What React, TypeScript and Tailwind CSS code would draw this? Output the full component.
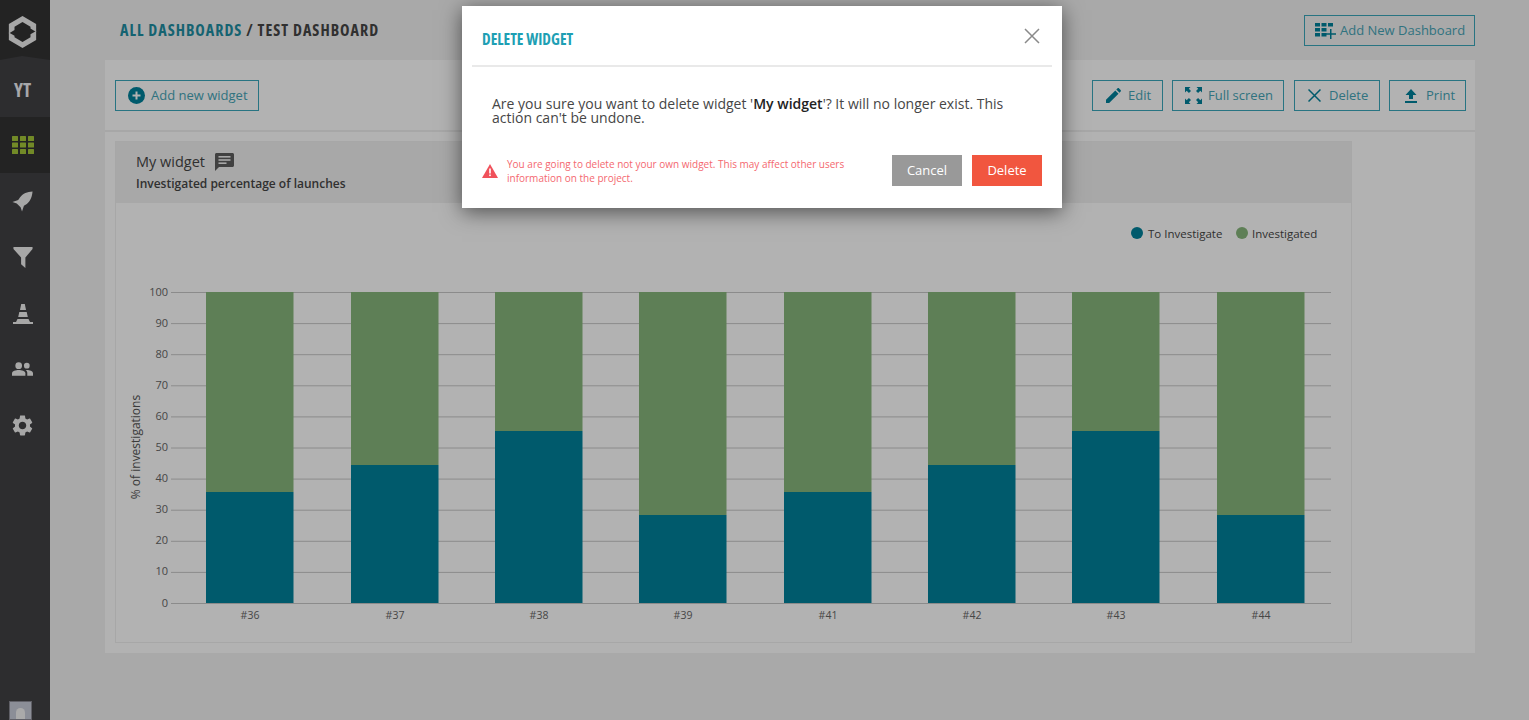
import type { ReactNode } from "react";

const bars = [
  { label: "#36", x: 206, top: 492 },
  { label: "#37", x: 351, top: 465 },
  { label: "#38", x: 495, top: 431 },
  { label: "#39", x: 639, top: 515 },
  { label: "#41", x: 784, top: 492 },
  { label: "#42", x: 928, top: 465 },
  { label: "#43", x: 1072, top: 431 },
  { label: "#44", x: 1217, top: 515 },
];

const ticks = [100, 90, 80, 70, 60, 50, 40, 30, 20, 10, 0];

const iconFill = "#f0f0f0";

function Logo() {
  return (
    <svg width="29" height="32" viewBox="0 0 30 34" fill={iconFill}>
      <path d="M15 0 29.500 8.500V17L23.500 13.200V11.500L15 6.500 6.500 11.500V15L.5 18.500V8.500Z" />
      <path d="M15 34 .5 25.500V17.500L6.500 21V22.500L15 27.500 23.500 22.500V19.500L29.500 16V25.500Z" />
    </svg>
  );
}

function Rocket() {
  return (
    <svg width="21" height="21" viewBox="0 0 22 22" fill={iconFill}>
      <path d="M21.500.5C16 1 11.500 2.500 8.500 6.500L6.500 9.500 .5 11.500 5 13 9 17 10.500 21.500 12.500 15.500 15.500 13.500C19.500 10.500 21 6 21.500.5Z" />
    </svg>
  );
}

function Funnel() {
  return (
    <svg width="20" height="21" viewBox="0 0 20 22" fill={iconFill}>
      <path d="M0 0H20V2L12.500 11V22L8 18V11L0 2Z" />
    </svg>
  );
}

function Cone() {
  return (
    <svg width="20" height="20" viewBox="0 0 20 20" fill={iconFill}>
      <path d="M8.200 0H11.800L13 6H7Z" />
      <path d="M6.300 8H13.700L14.800 13H5.200Z" />
      <path d="M4.500 15H15.500L17 18H20V20H0V18H3Z" />
    </svg>
  );
}

function People() {
  return (
    <svg width="21" height="14" viewBox="0 0 22 14" fill={iconFill}>
      <circle cx="7" cy="3.500" r="3.500" />
      <circle cx="15.500" cy="3.500" r="3" />
      <path d="M0 14V11.500C0 9 4 8 7 8S14 9 14 11.500V14Z" />
      <path d="M15.500 8C18.500 8 22 9 22 11.500V14H16V11C16 9.800 15.300 8.800 14.300 8.100Z" />
    </svg>
  );
}

function Gear() {
  return (
    <svg width="25" height="25" viewBox="0 0 24 24" fill={iconFill}>
      <path d="M19.140 12.940c.04-.3.060-.61.060-.94 0-.32-.02-.64-.07-.94l2.030-1.580c.18-.14.230-.41.120-.61l-1.920-3.320c-.12-.22-.37-.29-.59-.22l-2.390.96c-.5-.38-1.030-.7-1.620-.94l-.36-2.540c-.04-.24-.24-.41-.48-.41h-3.840c-.24 0-.43.170-.47.410l-.36 2.540c-.59.24-1.130.57-1.620.94l-2.390-.96c-.22-.08-.47 0-.59.220L2.740 8.870c-.12.210-.08.47.120.61l2.030 1.580c-.05.3-.09.63-.09.940s.02.640.07.940l-2.030 1.580c-.18.140-.23.410-.12.610l1.920 3.320c.12.220.37.290.59.220l2.390-.96c.5.380 1.030.7 1.620.94l.36 2.540c.05.240.24.410.48.410h3.840c.24 0 .44-.17.470-.41l.36-2.540c.59-.24 1.130-.56 1.620-.94l2.390.96c.22.080.47 0 .59-.22l1.920-3.320c.12-.22.070-.47-.12-.61l-2.010-1.580zM12 15.600c-1.980 0-3.600-1.620-3.600-3.600s1.620-3.600 3.600-3.600 3.600 1.620 3.600 3.600-1.620 3.600-3.600 3.600z" />
    </svg>
  );
}

function GridIcon({ color }: { color: string }) {
  const cells = [];
  for (let r = 0; r < 3; r++) {
    for (let c = 0; c < 3; c++) {
      cells.push(<rect key={`${r}-${c}`} x={c * 8} y={r * 6.500} width="6" height="5" rx="0.500" />);
    }
  }
  return (
    <svg width="22" height="18" viewBox="0 0 22 18" fill={color}>
      {cells}
    </svg>
  );
}

function Sidebar() {
  return (
    <aside className="flex h-full w-[50px] shrink-0 flex-col bg-[#414144]">
      <div className="relative flex h-[60px] w-full items-start justify-center bg-[#333333] pr-[5px] pt-[16px]">
        <Logo />
        <svg className="absolute bottom-0 left-0" width="50" height="4" viewBox="0 0 50 4" fill="#414144">
          <path d="M0 4 22 0 50 4Z" />
        </svg>
      </div>
      <div className="flex h-[57px] w-full items-center justify-center pr-[5px] pt-[3px] text-[19px] font-bold text-[#f0f0f4] [font-stretch:75%]">
        YT
      </div>
      <div className="flex h-[56px] w-full items-center justify-center bg-[#333333] pr-[5px]">
        <GridIcon color="#a4c639" />
      </div>
      <div className="flex h-[56px] w-full items-center justify-center pr-[5px]"><Rocket /></div>
      <div className="flex h-[57px] w-full items-center justify-center pr-[5px]"><Funnel /></div>
      <div className="flex h-[55px] w-full items-center justify-center pr-[5px]"><Cone /></div>
      <div className="flex h-[55px] w-full items-center justify-center pr-[5px]"><People /></div>
      <div className="flex h-[58px] w-full items-center justify-center pr-[5px]"><Gear /></div>
      <div className="ml-[9px] mt-auto flex h-[19px] w-[23px] justify-center overflow-hidden border border-[#8a8a94] bg-[#c8ccd8] pt-[6px]">
        <div className="h-[24px] w-[9px] rounded-full bg-[#f4f4f4]" />
      </div>
    </aside>
  );
}

function OutlineButton({ icon, label, className }: { icon: ReactNode; label: string; className: string }) {
  return (
    <button className={`flex h-[31px] items-center whitespace-nowrap border border-[#3aa6ba] text-[13px] text-[#46a5b7] ${className}`}>
      {icon}
      <span>{label}</span>
    </button>
  );
}

function Toolbar() {
  return (
    <div className="flex h-[72px] items-center border-b-2 border-[#f0f0f0] pl-[10px] pr-[9px] pt-[1px]">
      <OutlineButton
        className="w-[144px] pl-[12px] gap-[6px]"
        label="Add new widget"
        icon={
          <svg width="17" height="17" viewBox="0 0 17 17">
            <circle cx="8.500" cy="8.500" r="8.500" fill="#00829b" />
            <path d="M8.500 4.500v8M4.500 8.500h8" stroke="#ffffff" strokeWidth="2" />
          </svg>
        }
      />
      <div className="ml-auto flex gap-[9px]">
        <OutlineButton
          className="w-[71px] pl-[13px] gap-[7px]"
          label="Edit"
          icon={
            <svg width="15" height="15" viewBox="0 0 15 15" fill="#00829b">
              <path d="M0 15V11.800L9.300 2.500 12.500 5.700 3.200 15Z" />
              <path d="M10.300 1.500 11.400.400C11.900-.1 12.600-.1 13.100.400L14.600 1.900C15.100 2.400 15.100 3.100 14.600 3.600L13.500 4.700Z" />
            </svg>
          }
        />
        <OutlineButton
          className="w-[112px] pl-[12px] gap-[6px]"
          label="Full screen"
          icon={
            <svg width="17" height="17" viewBox="0 0 17 17" fill="#00829b">
              <path d="M0 0H5.500L3.800 1.700 6 3.900 3.900 6 1.700 3.800 0 5.500Z" />
              <path d="M17 0V5.500L15.300 3.800 13.100 6 11 3.900 13.200 1.700 11.500 0Z" />
              <path d="M0 17V11.500L1.700 13.200 3.900 11 6 13.100 3.800 15.300 5.500 17Z" />
              <path d="M17 17H11.500L13.200 15.300 11 13.100 13.100 11 15.300 13.200 17 11.500Z" />
            </svg>
          }
        />
        <OutlineButton
          className="ml-[1px] w-[86px] pl-[13px] gap-[8px]"
          label="Delete"
          icon={
            <svg width="13" height="13" viewBox="0 0 13 13" stroke="#00829b" strokeWidth="1.500">
              <path d="M.5.500l12 12M12.500.500l-12 12" />
            </svg>
          }
        />
        <OutlineButton
          className="w-[77px] pl-[15px] gap-[9px]"
          label="Print"
          icon={
            <svg width="12" height="14" viewBox="0 0 12 14" fill="#00829b">
              <path d="M6 0 11.500 6H8V10H4V6H.5Z" />
              <rect x="0" y="12" width="12" height="2" />
            </svg>
          }
        />
      </div>
    </div>
  );
}

function Chart() {
  // coordinates are page pixels minus the chart box origin (116, 203)
  const ox = 116;
  const oy = 203;
  const step = 31.1;
  return (
    <svg width="1235" height="439" className="block">
      <circle cx={1137 - ox} cy={233 - oy} r="6" fill="#00829b" />
      <text x={1148 - ox} y={237.500 - oy} fontSize="11.500" fill="#464646">To Investigate</text>
      <circle cx={1242 - ox} cy={233 - oy} r="6" fill="#87b77b" />
      <text x={1252 - ox} y={237.500 - oy} fontSize="11.500" fill="#464646">Investigated</text>
      {ticks.map((t, i) => {
        const y = 292.500 + i * step - oy;
        return (
          <g key={t}>
            <line x1={171 - ox} x2={1331 - ox} y1={y} y2={y} stroke="#c8c8c8" />
            <text x={168 - ox} y={y + 3} fontSize="11" fill="#666666" textAnchor="end">{t}</text>
          </g>
        );
      })}
      <text
        transform={`translate(${140 - ox} ${447 - oy}) rotate(-90)`}
        fontSize="12"
        fill="#555555"
        textAnchor="middle"
      >
        % of investigations
      </text>
      {bars.map((b) => (
        <g key={b.label}>
          <rect x={b.x - ox} y={292 - oy} width="87.500" height={b.top - 292} fill="#87b77b" />
          <rect x={b.x - ox} y={b.top - oy} width="87.500" height={603 - b.top} fill="#00829b" />
          <text x={b.x + 44 - ox} y={619 - oy} fontSize="10.500" fill="#666666" textAnchor="middle">{b.label}</text>
        </g>
      ))}
    </svg>
  );
}

function Widget() {
  return (
    <section className="ml-[10px] mt-[9px] w-[1237px] border border-[#efefef]">
      <div className="h-[61px] bg-[#f1f1f1] px-[20px] pt-[9px]">
        <div className="flex items-center gap-[10px] text-[14.500px] leading-[22px] text-[#464646]">
          <span>My widget</span>
          <svg width="19" height="18" viewBox="0 0 19 18" fill="#5e5e5e">
            <path d="M1.500 0H17.500C18.300 0 19 .7 19 1.500V12.500C19 13.300 18.300 14 17.500 14H4L0 18V1.500C0 .7.700 0 1.500 0Z" />
            <rect x="3.500" y="3" width="12" height="1.600" fill="#f1f1f1" />
            <rect x="3.500" y="6.200" width="12" height="1.600" fill="#f1f1f1" />
            <rect x="3.500" y="9.400" width="8" height="1.600" fill="#f1f1f1" />
          </svg>
        </div>
        <p className="mt-[2px] text-[12px] font-semibold leading-[18px] text-[#464646]">
          Investigated percentage of launches
        </p>
      </div>
      <Chart />
    </section>
  );
}

function Modal() {
  return (
    <div className="absolute left-[462px] top-[6px] h-[202px] w-[600px] bg-white px-[10px] shadow-[0_4px_20px_rgba(0,0,0,0.55)]">
      <div className="flex h-[61px] items-center justify-between border-b-2 border-[#e9e9e9] pl-[10px] pr-[12px] pt-[5px]">
        <h2 className="mt-[4px] text-[15.500px] font-bold text-[#1e9fb4] [font-stretch:75%]">DELETE WIDGET</h2>
        <svg width="16" height="16" viewBox="0 0 16 16" stroke="#8a8a8a" strokeWidth="1.500" className="mb-[4px]">
          <path d="M1 1l14 14M15 1L1 15" />
        </svg>
      </div>
      <p className="pl-[20px] pr-[30px] pt-[30px] text-[14px] leading-[14px] text-[#464646]">
        Are you sure you want to delete widget '<b className="font-semibold text-[#222222]">My widget</b>'? It will no longer exist. This action can't be undone.
      </p>
      <div className="mt-[30px] flex items-center px-[10px]">
        <svg width="16" height="14" viewBox="0 0 16 14" className="shrink-0">
          <path d="M8 0 16 14H0Z" fill="#f0515b" />
          <rect x="7.200" y="4.500" width="1.600" height="5" fill="#ffffff" />
          <rect x="7.200" y="10.500" width="1.600" height="1.600" fill="#ffffff" />
        </svg>
        <p className="ml-[9px] w-[350px] text-[10px] leading-[14px] text-[#f4686f]">
          You are going to delete not your own widget. This may affect other users information on the project.
        </p>
        <div className="ml-auto flex gap-[10px]">
          <button className="h-[31px] w-[70px] bg-[#999999] text-[13px] text-white">Cancel</button>
          <button className="h-[31px] w-[70px] bg-[#f1563f] text-[13px] text-white">Delete</button>
        </div>
      </div>
    </div>
  );
}

export default function App() {
  return (
    <div className="relative flex h-screen overflow-hidden bg-[#f2f2f2] font-['Open_Sans',sans-serif]">
      <Sidebar />
      <main className="ml-[55px] mr-[54px] flex-1">
        <header className="flex h-[60px] items-center justify-between pl-[15px] pt-[1px]">
          <h1 className="mb-[1px] text-[16px] font-bold tracking-[1px] text-[#464646] [font-stretch:75%]">
            <span className="text-[#1e8ea3]">ALL DASHBOARDS</span> / TEST DASHBOARD
          </h1>
          <OutlineButton
            className="w-[171px] pl-[10px] gap-[4px]"
            label="Add New Dashboard"
            icon={
              <svg width="21" height="17" viewBox="0 0 21 17" fill="#00829b">
                <rect x="0" y="1" width="5" height="3.500" />
                <rect x="6.500" y="1" width="5" height="3.500" />
                <rect x="13" y="1" width="5" height="3.500" />
                <rect x="0" y="6" width="5" height="3.500" />
                <rect x="6.500" y="6" width="5" height="3.500" />
                <rect x="0" y="11" width="5" height="3.500" />
                <rect x="6.500" y="11" width="5" height="3.500" />
                <path d="M15 7h1.500v4.200h4.500v1.500h-4.500V17H15v-4.300h-4V11.200h4Z" />
              </svg>
            }
          />
        </header>
        <div className="h-[593px] bg-white">
          <Toolbar />
          <Widget />
        </div>
      </main>
      <div className="absolute inset-0 bg-black/30" />
      <Modal />
    </div>
  );
}
